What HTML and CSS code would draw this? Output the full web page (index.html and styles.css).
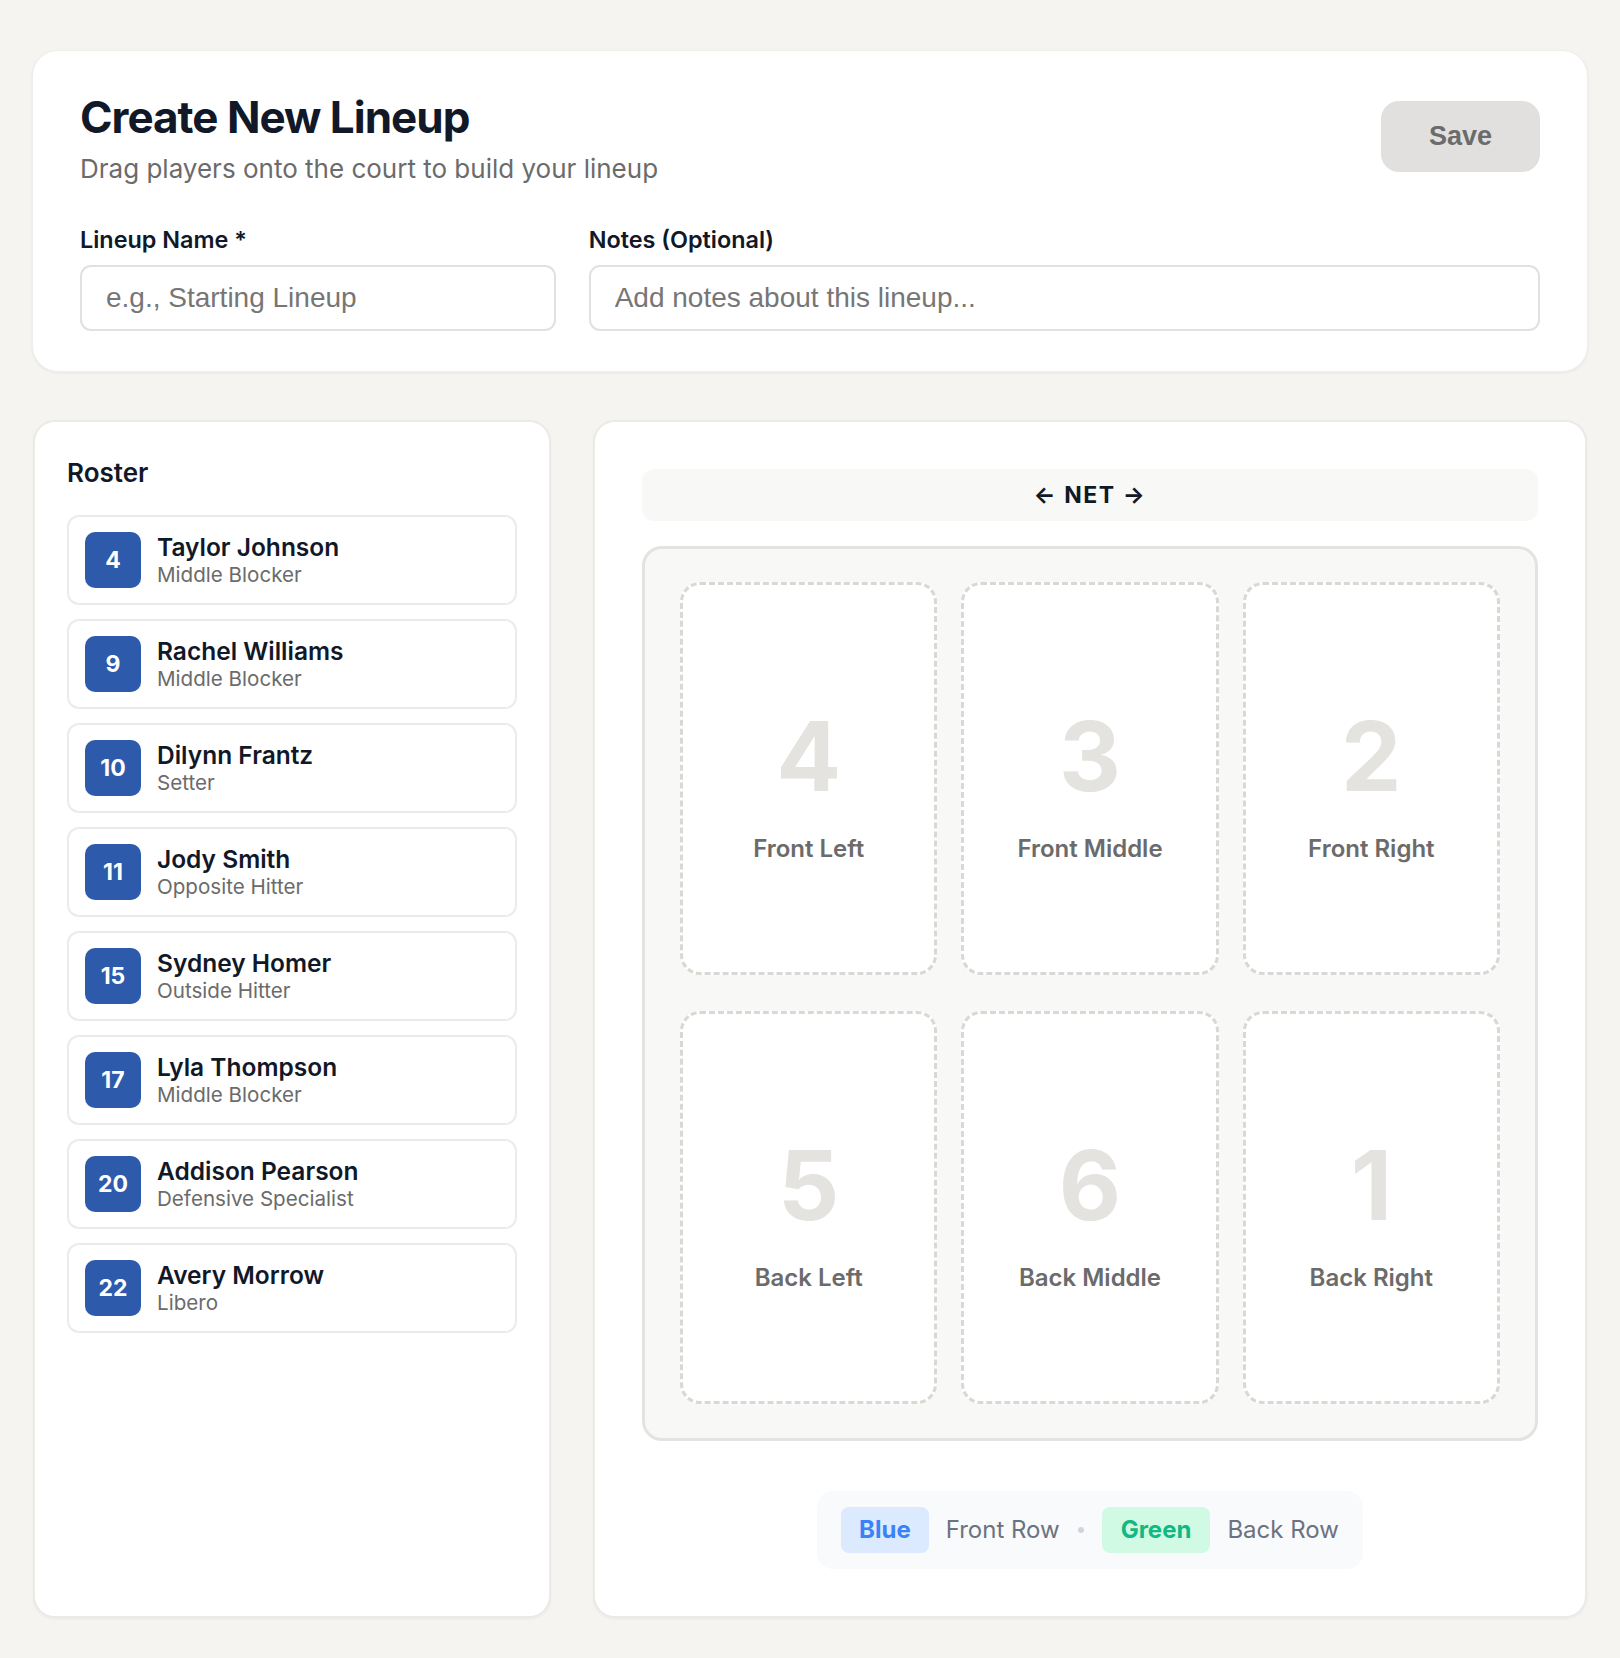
FILE: index.html
```html
<!DOCTYPE html>
<html lang="en">
<head>
<meta charset="utf-8">
<title>Create New Lineup</title>
<link rel="stylesheet" href="styles.css">
</head>
<body>
<main class="page">
  <section class="card header-card">
    <div class="header-row">
      <div class="header-text">
        <h1 class="title">Create New Lineup</h1>
        <p class="subtitle">Drag players onto the court to build your lineup</p>
      </div>
      <button class="save-btn" type="button">Save</button>
    </div>
    <div class="fields">
      <label class="field">
        <span class="field-label">Lineup Name *</span>
        <input class="field-input" type="text" placeholder="e.g., Starting Lineup">
      </label>
      <label class="field">
        <span class="field-label">Notes (Optional)</span>
        <input class="field-input" type="text" placeholder="Add notes about this lineup...">
      </label>
    </div>
  </section>

  <div class="workspace">
    <aside class="card roster-card">
      <h2 class="roster-title">Roster</h2>
      <ul class="roster-list">
        <li class="player"><span class="badge">4</span><div class="player-info"><span class="player-name">Taylor Johnson</span><span class="player-role">Middle Blocker</span></div></li>
        <li class="player"><span class="badge">9</span><div class="player-info"><span class="player-name">Rachel Williams</span><span class="player-role">Middle Blocker</span></div></li>
        <li class="player"><span class="badge">10</span><div class="player-info"><span class="player-name">Dilynn Frantz</span><span class="player-role">Setter</span></div></li>
        <li class="player"><span class="badge">11</span><div class="player-info"><span class="player-name">Jody Smith</span><span class="player-role">Opposite Hitter</span></div></li>
        <li class="player"><span class="badge">15</span><div class="player-info"><span class="player-name">Sydney Homer</span><span class="player-role">Outside Hitter</span></div></li>
        <li class="player"><span class="badge">17</span><div class="player-info"><span class="player-name">Lyla Thompson</span><span class="player-role">Middle Blocker</span></div></li>
        <li class="player"><span class="badge">20</span><div class="player-info"><span class="player-name">Addison Pearson</span><span class="player-role">Defensive Specialist</span></div></li>
        <li class="player"><span class="badge">22</span><div class="player-info"><span class="player-name">Avery Morrow</span><span class="player-role">Libero</span></div></li>
      </ul>
    </aside>

    <section class="card court-card">
      <div class="net">← NET →</div>
      <div class="court">
        <div class="spot"><span class="spot-num">4</span><span class="spot-label">Front Left</span></div>
        <div class="spot"><span class="spot-num">3</span><span class="spot-label">Front Middle</span></div>
        <div class="spot"><span class="spot-num">2</span><span class="spot-label">Front Right</span></div>
        <div class="spot"><span class="spot-num">5</span><span class="spot-label">Back Left</span></div>
        <div class="spot"><span class="spot-num">6</span><span class="spot-label">Back Middle</span></div>
        <div class="spot"><span class="spot-num">1</span><span class="spot-label">Back Right</span></div>
      </div>
      <div class="legend">
        <span class="chip chip-blue">Blue</span>
        <span class="legend-text">Front Row</span>
        <span class="legend-dot"></span>
        <span class="chip chip-green">Green</span>
        <span class="legend-text">Back Row</span>
      </div>
    </section>
  </div>
</main>
</body>
</html>
```

FILE: styles.css
```css
* { box-sizing: border-box; }

html, body {
  margin: 0;
  padding: 0;
}

body {
  background: #f5f4f1;
  font-family: Inter, "Noto Sans", sans-serif;
  color: #111827;
}

.page {
  padding: 50px 33px 42px;
  display: flex;
  flex-direction: column;
  gap: 48px;
}

.card {
  background: #ffffff;
}

/* Header card */
.header-card {
  margin: 0 -1px;
  border-radius: 26px;
  border: 1px solid #efeeea;
  box-shadow: 0 1px 3px rgba(0, 0, 0, 0.06);
  padding: 44px 47px 40px;
}

.header-row {
  display: flex;
  justify-content: space-between;
  align-items: flex-start;
}

.title {
  margin: 0;
  font-size: 44px;
  line-height: 44px;
  font-weight: 700;
  letter-spacing: -1px;
  color: #111827;
}

.subtitle {
  margin: 14px 0 0;
  font-size: 26px;
  line-height: 32px;
  color: #6b6b6b;
}

.save-btn {
  margin-top: 6px;
  border: none;
  border-radius: 18px;
  background: #e1e0de;
  color: #6b6b6b;
  font-family: "Liberation Sans", Arial, sans-serif;
  font-size: 27px;
  font-weight: 700;
  line-height: 31px;
  padding: 20px 48px;
}

.fields {
  margin-top: 41px;
  display: grid;
  grid-template-columns: 1fr 2fr;
  gap: 33px;
}

.field {
  display: flex;
  flex-direction: column;
  gap: 11px;
}

.field-label {
  font-size: 23.4px;
  line-height: 28px;
  font-weight: 600;
  color: #111827;
}

.field-input {
  height: 66px;
  border: 2px solid #e2e1df;
  border-radius: 11px;
  padding: 0 24px;
  font-family: "Liberation Sans", Arial, sans-serif;
  font-size: 28px;
  color: #111827;
  background: #ffffff;
  outline: none;
}

.field-input::placeholder {
  color: #767676;
}

/* Workspace */
.workspace {
  display: grid;
  grid-template-columns: 518px 1fr;
  gap: 42px;
  align-items: stretch;
}

.roster-card,
.court-card {
  border: 2px solid #ebeae7;
  border-radius: 22px;
  box-shadow: 0 1px 3px rgba(0, 0, 0, 0.05);
}

.roster-card {
  padding: 32px;
}

.roster-title {
  margin: 2px 0 25px;
  font-size: 26px;
  line-height: 34px;
  font-weight: 600;
  color: #111827;
}

.roster-list {
  list-style: none;
  margin: 0;
  padding: 0;
  display: flex;
  flex-direction: column;
  gap: 14px;
}

.player {
  display: flex;
  align-items: center;
  gap: 16px;
  padding: 15px 16px;
  border: 2px solid #ebebea;
  border-radius: 12px;
  background: #ffffff;
}

.badge {
  width: 56px;
  height: 56px;
  flex: none;
  border-radius: 10px;
  background: #2d5aab;
  color: #ffffff;
  display: flex;
  align-items: center;
  justify-content: center;
  font-size: 23px;
  font-weight: 700;
}

.player-info {
  display: flex;
  flex-direction: column;
}

.player-name {
  font-size: 24.5px;
  line-height: 30px;
  font-weight: 600;
  color: #111827;
}

.player-role {
  font-size: 20.6px;
  line-height: 26px;
  color: #6b6b6b;
}

/* Court */
.court-card {
  padding: 47px;
  display: flex;
  flex-direction: column;
  align-items: stretch;
}

.net {
  height: 52px;
  border-radius: 12px;
  background: #f8f8f6;
  display: flex;
  align-items: center;
  justify-content: center;
  font-size: 23px;
  font-weight: 700;
  letter-spacing: 1.6px;
  color: #111827;
}

.court {
  margin-top: 25px;
  border: 3px solid #e4e3df;
  border-radius: 20px;
  background: #f8f8f6;
  padding: 33px 35px 34px;
  display: grid;
  grid-template-columns: repeat(3, 1fr);
  grid-auto-rows: 393px;
  column-gap: 24px;
  row-gap: 36px;
}

.spot {
  border: 3px dashed #d9d8d4;
  border-radius: 20px;
  background: #ffffff;
  padding-top: 15px;
  display: flex;
  flex-direction: column;
  align-items: center;
  justify-content: center;
}

.spot-num {
  font-size: 96px;
  line-height: 96px;
  font-weight: 700;
  color: #e4e3df;
}

.spot-label {
  margin-top: 30px;
  font-size: 24px;
  line-height: 30px;
  font-weight: 600;
  color: #6b6b6b;
}

.legend {
  margin-top: 50px;
  align-self: center;
  display: flex;
  align-items: center;
  gap: 17px;
  padding: 16px 24px;
  border-radius: 16px;
  background: #f9fafb;
}

.chip {
  border-radius: 8px;
  padding: 8px 18px;
  font-size: 24px;
  line-height: 30px;
  font-weight: 700;
}

.chip-blue {
  background: #dbeafe;
  color: #3b82f6;
}

.chip-green {
  padding: 8px 19px;
  background: #d1fae5;
  color: #10b981;
}

.legend-text {
  font-size: 24px;
  line-height: 30px;
  color: #6b7280;
}

.legend-dot {
  width: 6px;
  height: 6px;
  margin: 0 1px;
  border-radius: 50%;
  background: #d1d5db;
}
```
